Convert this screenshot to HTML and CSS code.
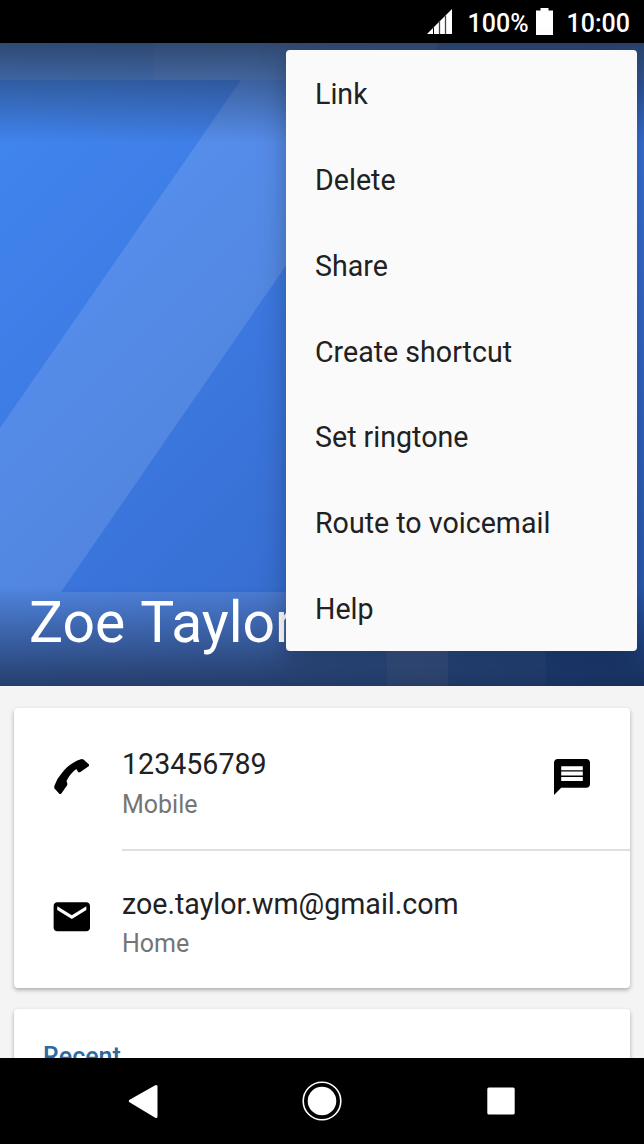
FILE: index.html
```html
<!DOCTYPE html>
<html lang="en">
  <head>
    <meta charset="UTF-8" />
    <meta name="viewport" content="width=device-width, initial-scale=1.0" />
    <title>Zoe Taylor</title>
    <link rel="stylesheet" href="styles.css">
  </head>
  <body>
    <div class="phone">
      <header class="status-bar">
        <svg class="signal" width="26" height="26" viewBox="0 0 26 26">
          <path d="M0 25 25 0V25z" fill="#fff" />
          <path d="M6.500 18.500V25" stroke="#000" />
          <path d="M12.500 12.500V25M18.500 6.500V25" stroke="#444" stroke-width="1.300" />
        </svg>
        <span class="battery-level">100%</span>
        <svg class="battery" width="17" height="27" viewBox="0 0 17 27">
          <path d="M4.500 0h8v2.500H17V27H0V2.500h4.500z" fill="#fff" />
        </svg>
        <span class="clock">10:00</span>
      </header>

      <section class="photo">
        <svg class="photo-art" width="644" height="643" viewBox="0 0 644 643">
          <defs>
            <linearGradient id="blue" x1="0" y1="0" x2="644" y2="643" gradientUnits="userSpaceOnUse">
              <stop offset="0" stop-color="#4187f2" />
              <stop offset=".3" stop-color="#3e7ce5" />
              <stop offset=".6" stop-color="#3870d4" />
              <stop offset="1" stop-color="#2858ac" />
            </linearGradient>
          </defs>
          <rect width="644" height="643" fill="url(#blue)" />
          <g fill="#fff">
            <path d="M241 37H414L61 549H0V385z" fill-opacity=".12" />
            <path d="M0 0H154V37H0z" fill-opacity=".13" />
            <path d="M154 0H439L414 37H154z" fill-opacity=".18" />
            <path d="M439 0H644V37H414z" fill-opacity=".07" />
            <path d="M0 549H387V643H0z" fill-opacity=".11" />
            <path d="M387 549H448V643H387z" fill-opacity=".19" />
            <path d="M448 549H546V643H448z" fill-opacity=".07" />
          </g>
        </svg>
        <h1 class="name">Zoe Taylor</h1>
      </section>

      <main class="content">
        <section class="card">
          <div class="entry">
            <svg class="entry-icon" width="44" height="44" viewBox="0 0 44 44">
              <path d="M4.300 31Q6.500 24 11.700 18.300Q17 11 23.300 7.700Q27 5 31.700 4L33.500 4.500 39 9.500V11L30 17.300H28.300L26.300 14Q20 18.500 16.500 26L17.300 28.300V30L11 39H9.500L4.300 33.300z" />
            </svg>
            <div class="entry-text">
              <div class="value">123456789</div>
              <div class="label">Mobile</div>
            </div>
            <svg class="message" width="36" height="36" viewBox="2 2 20 20">
              <path d="M20 2H4c-1.100 0-2 .9-2 2v18l4-4h14c1.100 0 2-.9 2-2V4c0-1.100-.9-2-2-2z" />
              <path d="M6 6H18V8.200H6zM6 9H18V11.200H6zM6 12H18V14.200H6z" fill="#fff" />
            </svg>
          </div>
          <div class="entry">
            <svg class="entry-icon" width="44" height="44" viewBox="0 0 24.200 24.200">
              <path d="M20 4H4c-1.100 0-2 .9-2 2v12c0 1.100.9 2 2 2h16c1.100 0 2-.9 2-2V6c0-1.100-.9-2-2-2zm0 4.200-8 5-8-5V6.200l8 5 8-5z" />
            </svg>
            <div class="entry-text">
              <div class="value">zoe.taylor.wm@gmail.com</div>
              <div class="label">Home</div>
            </div>
          </div>
        </section>
        <section class="card recent">
          <h2>Recent</h2>
        </section>
      </main>

      <nav class="nav-bar">
        <svg width="40" height="40" viewBox="0 0 40 40">
          <path d="M7.300 20 33 5.500V35.500z" fill="#fff" stroke="#fff" stroke-width="3" stroke-linejoin="round" />
        </svg>
        <svg width="40" height="40" viewBox="0 0 40 40">
          <circle cx="20" cy="20" r="18.800" fill="none" stroke="#fff" stroke-width="1.600" />
          <circle cx="20" cy="20" r="14.300" fill="#fff" />
        </svg>
        <svg width="40" height="40" viewBox="0 0 40 40">
          <rect x="6.300" y="6.500" width="27.400" height="27" rx="1.500" fill="#fff" />
        </svg>
      </nav>

      <ul class="menu">
        <li>Link</li>
        <li>Delete</li>
        <li>Share</li>
        <li>Create shortcut</li>
        <li>Set ringtone</li>
        <li>Route to voicemail</li>
        <li>Help</li>
      </ul>
    </div>
  </body>
</html>
```

FILE: styles.css
```css
body {
  margin: 0;
  font-family: Roboto, sans-serif;
  color: #212121;
}
.phone {
  position: relative;
  display: flex;
  flex-direction: column;
  width: 644px;
  height: 1144px;
  overflow: hidden;
  background-color: #f4f4f4;
}
.status-bar {
  display: flex;
  flex: none;
  align-items: center;
  justify-content: flex-end;
  box-sizing: border-box;
  height: 43px;
  padding-right: 14px;
  background-color: #000;
  color: #fff;
  font-size: 25px;
  font-weight: 500;
}
.battery-level {
  margin: 3px 7px 0 15px;
}
.clock {
  margin: 3px 0 0 14px;
}
.photo {
  position: relative;
  flex: none;
  display: flex;
  align-items: flex-end;
  height: 643px;
}
.photo-art {
  position: absolute;
  inset: 0;
}
.photo::after {
  content: "";
  position: absolute;
  inset: 0;
  background:
    linear-gradient(rgba(28, 40, 60, .7), rgba(28, 40, 60, 0) 100px),
    linear-gradient(to top, rgba(14, 24, 45, .64), rgba(14, 24, 45, 0) 100px);
}
.name {
  position: relative;
  z-index: 1;
  margin: 0 0 30px 29px;
  color: #fff;
  font-size: 57px;
  font-weight: 400;
  line-height: 67px;
  word-spacing: 2px;
}
.content {
  flex: 1;
  min-height: 0;
  overflow: hidden;
  padding: 22px 14px 0;
}
.card {
  margin-bottom: 21px;
  border-radius: 4px;
  background-color: #fff;
  box-shadow: 0 2px 4px rgba(0, 0, 0, .3);
}
.entry {
  display: flex;
  height: 140px;
}
.entry-icon {
  flex: none;
  margin: 47px 28px 0 36px;
}
.entry-text {
  flex: 1;
  padding-top: 36px;
}
.entry:first-child .entry-text {
  height: 105px;
  margin-right: -76px;
  border-bottom: 2px solid #e0e0e0;
}
.value {
  font-size: 28.600px;
  line-height: 40px;
}
.label {
  color: #757575;
  font-size: 25px;
  line-height: 40px;
}
.entry:first-child .label {
  line-height: 41px;
}
.message {
  flex: none;
  margin: 51px 40px 0 0;
}
.recent {
  height: 120px;
}
.recent h2 {
  margin: 0;
  padding: 32px 29px 0;
  color: #2a6ba3;
  font-size: 25px;
  font-weight: 500;
  line-height: 32px;
}
.nav-bar {
  display: flex;
  flex: none;
  align-items: center;
  justify-content: center;
  gap: 139px;
  height: 86px;
  background-color: #000;
}
.menu {
  position: absolute;
  top: 50px;
  right: 7px;
  z-index: 2;
  box-sizing: border-box;
  width: 351px;
  height: 601px;
  margin: 0;
  padding: 2px 29px 0;
  border-radius: 4px;
  background-color: #fafafa;
  box-shadow: 0 8px 32px rgba(0, 0, 0, .2), 0 10px 14px rgba(0, 0, 0, .08);
  list-style: none;
  font-size: 28.600px;
  line-height: 85.850px;
}
```
